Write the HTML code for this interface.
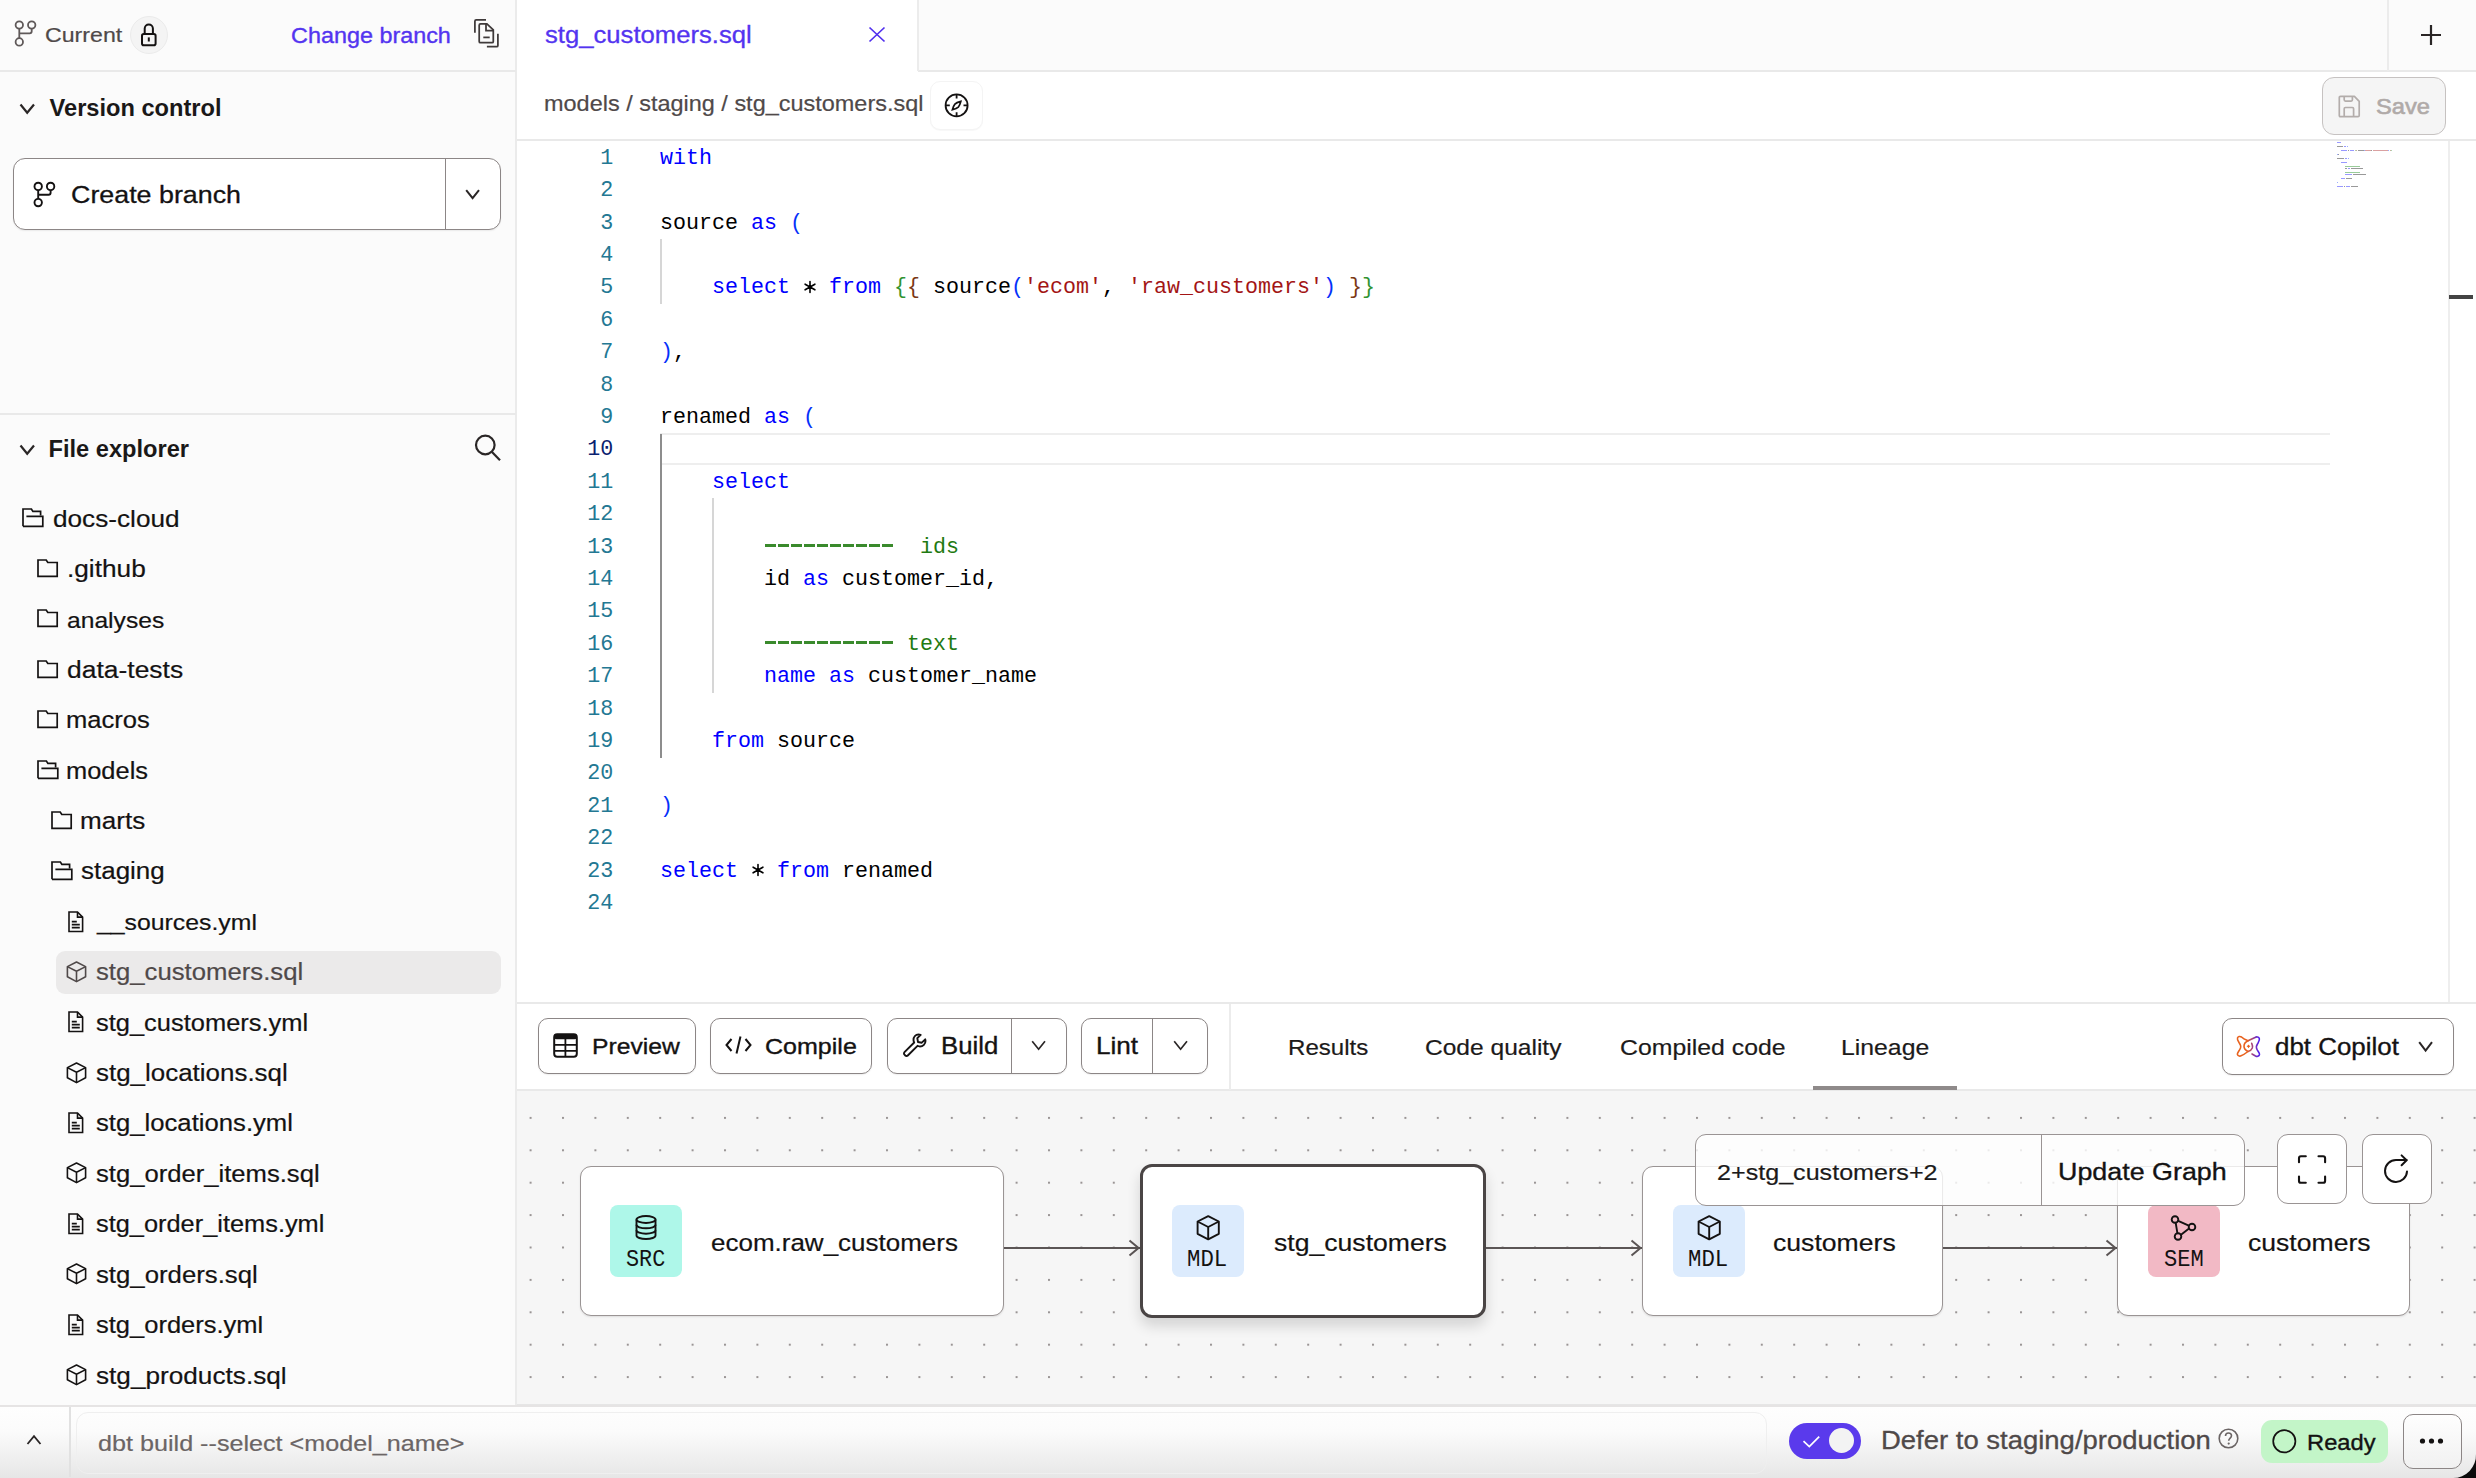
<!DOCTYPE html>
<html><head><meta charset="utf-8"><style>*{box-sizing:border-box;margin:0;padding:0}
html,body{width:2476px;height:1478px;overflow:hidden;background:#fff;font-family:"Liberation Sans",sans-serif}
.a{position:absolute}
.t{position:absolute;white-space:pre;line-height:1}
svg{position:absolute;overflow:visible}
.m{font-family:"Liberation Mono",monospace;font-size:21.663px}
</style></head>
<body>
<div class="a" style="left:0px;top:0px;width:516px;height:1406px;background:#fbfbfb"></div>
<div class="a" style="left:515px;top:0px;width:2px;height:1406px;background:#ebebeb"></div>
<div class="a" style="left:0px;top:70px;width:516px;height:2px;background:#e9e9e9"></div>
<div class="a" style="left:0px;top:413px;width:516px;height:2px;background:#e9e9e9"></div>
<svg style="left:0px;top:0px;" width="60" height="60" viewBox="0 0 60 60" fill="none"><g stroke="#5f5959" stroke-width="1.8"><circle cx="19.3" cy="25" r="3.7"/><circle cx="31.7" cy="25" r="3.7"/><circle cx="19.3" cy="41.9" r="3.7"/><path d="M19.3 28.7V38.2M19.3 33.3H29.7Q31.7 33.3 31.7 31.3V28.7"/></g></svg>
<div class="a" style="left:130px;top:16px;width:38px;height:38px;background:#f4f4f4;border:1px solid #ebebeb;border-radius:50%"></div>
<svg style="left:0px;top:0px;" width="200" height="60" viewBox="0 0 200 60" fill="none"><g stroke="#141212" stroke-width="2"><rect x="142" y="34" width="13.6" height="11.2" rx="1.8"/><path d="M144.7 34V28.6a4.1 4.1 0 0 1 8.2 0V34"/><path d="M148.8 37.4v4.1"/></g></svg>
<svg style="left:465px;top:10px;" width="45" height="45" viewBox="0 0 45 45" fill="none"><g stroke="#3f3a3a" stroke-width="1.75"><path d="M9.9 22.8V11.2Q9.9 9.9 11.2 9.9H21"/><path d="M14.2 15.2Q14.2 13.9 15.5 13.9H21.9L28.3 19.9V31.4Q28.3 32.7 27 32.7H15.5Q14.2 32.7 14.2 31.4Z"/><path d="M21 13.9V20.6H28.3"/><path d="M18.3 27.4H24.7"/><path d="M32.9 23.8V35.4Q32.9 36.7 31.6 36.7H21.9"/></g></svg>
<svg style="left:19px;top:103px;" width="17" height="12" viewBox="0 0 17 12" fill="none"><path d="M1.5 1.5L8.2 9.8L15 1.5" stroke="#2a2626" stroke-width="2.2"/></svg>
<div class="a" style="left:13px;top:158px;width:488px;height:72px;background:#fff;border:1px solid #8c8686;border-radius:12px;box-shadow:0 1px 1.5px rgba(0,0,0,.07)"></div>
<div class="a" style="left:445px;top:159px;width:1px;height:70px;background:#8c8686"></div>
<svg style="left:0px;top:0px;" width="60" height="220" viewBox="0 0 60 220" fill="none"><g stroke="#141212" stroke-width="1.9"><circle cx="38.2" cy="186.4" r="3.7"/><circle cx="50.6" cy="186.4" r="3.7"/><circle cx="38.2" cy="202.6" r="3.7"/><path d="M38.2 190.1V198.9M38.2 194.7H48.6Q50.6 194.7 50.6 192.7V190.1"/></g></svg>
<svg style="left:465px;top:189px;" width="16" height="12" viewBox="0 0 16 12" fill="none"><path d="M1.2 1.2L7.6 9.2L14 1.2" stroke="#2a2626" stroke-width="2"/></svg>
<svg style="left:19px;top:444px;" width="17" height="12" viewBox="0 0 17 12" fill="none"><path d="M1.5 1.5L8.2 9.8L15 1.5" stroke="#2a2626" stroke-width="2.2"/></svg>
<svg style="left:474px;top:434px;" width="28" height="28" viewBox="0 0 28 28" fill="none"><g stroke="#2a2626" stroke-width="2.2"><circle cx="11.3" cy="11" r="9.3"/><path d="M18 18L26 26.2"/></g></svg>
<div class="a" style="left:56px;top:951px;width:445px;height:43px;background:#ebeaea;border-radius:9px"></div>
<svg style="left:22px;top:508.40000000000003px;" width="22" height="20" viewBox="0 0 22 20" fill="none"><path d="M1 18.3V1H9.4L10.9 3.4H18.6V7.3M4.4 8.4H20.8V18.3H1" stroke="#141212" stroke-width="1.7" stroke-linejoin="miter"/></svg>
<svg style="left:36.9px;top:558.7px;" width="22" height="20" viewBox="0 0 22 20" fill="none"><path d="M1 1H9.2L10.8 3.5H20.2V17.4H1Z" stroke="#141212" stroke-width="1.7" stroke-linejoin="miter"/></svg>
<svg style="left:36.9px;top:609.1px;" width="22" height="20" viewBox="0 0 22 20" fill="none"><path d="M1 1H9.2L10.8 3.5H20.2V17.4H1Z" stroke="#141212" stroke-width="1.7" stroke-linejoin="miter"/></svg>
<svg style="left:36.9px;top:659.5000000000001px;" width="22" height="20" viewBox="0 0 22 20" fill="none"><path d="M1 1H9.2L10.8 3.5H20.2V17.4H1Z" stroke="#141212" stroke-width="1.7" stroke-linejoin="miter"/></svg>
<svg style="left:36.9px;top:709.9000000000001px;" width="22" height="20" viewBox="0 0 22 20" fill="none"><path d="M1 1H9.2L10.8 3.5H20.2V17.4H1Z" stroke="#141212" stroke-width="1.7" stroke-linejoin="miter"/></svg>
<svg style="left:36.8px;top:760.4000000000001px;" width="22" height="20" viewBox="0 0 22 20" fill="none"><path d="M1 18.3V1H9.4L10.9 3.4H18.6V7.3M4.4 8.4H20.8V18.3H1" stroke="#141212" stroke-width="1.7" stroke-linejoin="miter"/></svg>
<svg style="left:50.6px;top:810.7px;" width="22" height="20" viewBox="0 0 22 20" fill="none"><path d="M1 1H9.2L10.8 3.5H20.2V17.4H1Z" stroke="#141212" stroke-width="1.7" stroke-linejoin="miter"/></svg>
<svg style="left:50.6px;top:861.2px;" width="22" height="20" viewBox="0 0 22 20" fill="none"><path d="M1 18.3V1H9.4L10.9 3.4H18.6V7.3M4.4 8.4H20.8V18.3H1" stroke="#141212" stroke-width="1.7" stroke-linejoin="miter"/></svg>
<svg style="left:67.9px;top:910.6000000000001px;" width="16" height="22" viewBox="0 0 16 22" fill="none"><g stroke="#141212" stroke-width="1.6" stroke-linejoin="miter"><path d="M1 1H9.5L14.6 6.1V20.5H1Z"/><path d="M9.5 1V6.1H14.6"/><path d="M3.8 10.6H8.8M3.8 13.6H11.8M3.8 16.6H11.8"/></g></svg>
<svg style="left:65.6px;top:960.8px;" width="21" height="22" viewBox="0 0 21 22" fill="none"><g stroke="#4f4949" stroke-width="1.6" stroke-linejoin="round"><path d="M10.5 1L19.6 5.6V15.8L10.5 20.6L1.4 15.8V5.6Z"/><path d="M1.4 5.6L10.5 10.3L19.6 5.6M10.5 10.3V20.6"/></g></svg>
<svg style="left:67.9px;top:1011.4000000000001px;" width="16" height="22" viewBox="0 0 16 22" fill="none"><g stroke="#141212" stroke-width="1.6" stroke-linejoin="miter"><path d="M1 1H9.5L14.6 6.1V20.5H1Z"/><path d="M9.5 1V6.1H14.6"/><path d="M3.8 10.6H8.8M3.8 13.6H11.8M3.8 16.6H11.8"/></g></svg>
<svg style="left:65.6px;top:1061.6px;" width="21" height="22" viewBox="0 0 21 22" fill="none"><g stroke="#141212" stroke-width="1.6" stroke-linejoin="round"><path d="M10.5 1L19.6 5.6V15.8L10.5 20.6L1.4 15.8V5.6Z"/><path d="M1.4 5.6L10.5 10.3L19.6 5.6M10.5 10.3V20.6"/></g></svg>
<svg style="left:67.9px;top:1112.2px;" width="16" height="22" viewBox="0 0 16 22" fill="none"><g stroke="#141212" stroke-width="1.6" stroke-linejoin="miter"><path d="M1 1H9.5L14.6 6.1V20.5H1Z"/><path d="M9.5 1V6.1H14.6"/><path d="M3.8 10.6H8.8M3.8 13.6H11.8M3.8 16.6H11.8"/></g></svg>
<svg style="left:65.6px;top:1162.4px;" width="21" height="22" viewBox="0 0 21 22" fill="none"><g stroke="#141212" stroke-width="1.6" stroke-linejoin="round"><path d="M10.5 1L19.6 5.6V15.8L10.5 20.6L1.4 15.8V5.6Z"/><path d="M1.4 5.6L10.5 10.3L19.6 5.6M10.5 10.3V20.6"/></g></svg>
<svg style="left:67.9px;top:1213.0000000000002px;" width="16" height="22" viewBox="0 0 16 22" fill="none"><g stroke="#141212" stroke-width="1.6" stroke-linejoin="miter"><path d="M1 1H9.5L14.6 6.1V20.5H1Z"/><path d="M9.5 1V6.1H14.6"/><path d="M3.8 10.6H8.8M3.8 13.6H11.8M3.8 16.6H11.8"/></g></svg>
<svg style="left:65.6px;top:1263.2px;" width="21" height="22" viewBox="0 0 21 22" fill="none"><g stroke="#141212" stroke-width="1.6" stroke-linejoin="round"><path d="M10.5 1L19.6 5.6V15.8L10.5 20.6L1.4 15.8V5.6Z"/><path d="M1.4 5.6L10.5 10.3L19.6 5.6M10.5 10.3V20.6"/></g></svg>
<svg style="left:67.9px;top:1313.8px;" width="16" height="22" viewBox="0 0 16 22" fill="none"><g stroke="#141212" stroke-width="1.6" stroke-linejoin="miter"><path d="M1 1H9.5L14.6 6.1V20.5H1Z"/><path d="M9.5 1V6.1H14.6"/><path d="M3.8 10.6H8.8M3.8 13.6H11.8M3.8 16.6H11.8"/></g></svg>
<svg style="left:65.6px;top:1364.0px;" width="21" height="22" viewBox="0 0 21 22" fill="none"><g stroke="#141212" stroke-width="1.6" stroke-linejoin="round"><path d="M10.5 1L19.6 5.6V15.8L10.5 20.6L1.4 15.8V5.6Z"/><path d="M1.4 5.6L10.5 10.3L19.6 5.6M10.5 10.3V20.6"/></g></svg>
<div class="a" style="left:517px;top:0px;width:1959px;height:71px;background:#fbfbfb"></div>
<div class="a" style="left:517px;top:70px;width:1959px;height:2px;background:#e9e9e9"></div>
<div class="a" style="left:517px;top:0px;width:401px;height:72px;background:#fff"></div>
<div class="a" style="left:917px;top:0px;width:2px;height:71px;background:#ececec"></div>
<div class="a" style="left:2387px;top:0px;width:2px;height:71px;background:#ececec"></div>
<svg style="left:869px;top:27px;" width="16" height="15" viewBox="0 0 16 15" fill="none"><path d="M0.5 0.5L15.5 14.5M15.5 0.5L0.5 14.5" stroke="#5130ee" stroke-width="1.7"/></svg>
<svg style="left:2420px;top:24px;" width="22" height="22" viewBox="0 0 22 22" fill="none"><path d="M11 1V21M1 11H21" stroke="#2a2626" stroke-width="2.2"/></svg>
<div class="a" style="left:930px;top:81px;width:53px;height:49px;border:1px solid #f4f4f4;border-radius:10px;background:#fff;box-shadow:0 1px 1px rgba(0,0,0,.03)"></div>
<svg style="left:944px;top:93px;" width="26" height="26" viewBox="0 0 26 26" fill="none"><g stroke="#141212" stroke-width="1.8"><circle cx="12.6" cy="12.4" r="11"/><path d="M12.6 1.6V5.6M12.6 19.3V23.2M1.8 12.4H5.8M19.5 12.4H23.4"/><path d="M16.8 8.4Q15.6 12.6 14.3 14.1Q12.8 15.6 8.4 16.8Q9.6 12.6 10.9 11.1Q12.4 9.6 16.8 8.4Z" stroke-width="1.7"/></g></svg>
<div class="a" style="left:2322px;top:77px;width:124px;height:58px;background:#f5f5f5;border:1px solid #c6c2c1;border-radius:12px"></div>
<svg style="left:2338px;top:95px;" width="23" height="23" viewBox="0 0 23 23" fill="none"><g stroke="#b3adab" stroke-width="1.7" stroke-linejoin="round"><path d="M2.5 1.3H16.4L21.2 6.3V20.5Q21.2 21.7 20 21.7H2.5Q1.3 21.7 1.3 20.5V2.5Q1.3 1.3 2.5 1.3Z"/><path d="M6.2 1.3V4.8Q6.2 6.1 7.4 6.1H13.2Q14.4 6.1 14.4 4.8V1.3"/><path d="M6.2 21.7V13.7Q6.2 12.5 7.4 12.5H14.4Q15.6 12.5 15.6 13.7V21.7"/></g></svg>
<div class="a" style="left:517px;top:139px;width:1959px;height:2px;background:#e9e9e9"></div>
<div class="a" style="left:660px;top:433px;width:1670px;height:2px;background:#eeeeee"></div>
<div class="a" style="left:660px;top:463px;width:1670px;height:2px;background:#eeeeee"></div>
<div class="a" style="left:660px;top:239px;width:2px;height:65px;background:#d6d6d6"></div>
<div class="a" style="left:660px;top:434px;width:2px;height:324px;background:#8d8d8d"></div>
<div class="a" style="left:712px;top:498px;width:2px;height:195px;background:#d6d6d6"></div>
<span class="t m" style="left:600.30px;top:147.74px;color:#237893">1</span>
<span class="t m" style="left:660.00px;top:147.74px;color:#0000ff">with</span>
<span class="t m" style="left:600.30px;top:180.14px;color:#237893">2</span>
<span class="t m" style="left:600.30px;top:212.54px;color:#237893">3</span>
<span class="t m" style="left:660.00px;top:212.54px;color:#000000">source </span>
<span class="t m" style="left:751.00px;top:212.54px;color:#0000ff">as </span>
<span class="t m" style="left:790.00px;top:212.54px;color:#0431fa">(</span>
<span class="t m" style="left:600.30px;top:244.94px;color:#237893">4</span>
<span class="t m" style="left:600.30px;top:277.34px;color:#237893">5</span>
<span class="t m" style="left:712.00px;top:277.34px;color:#0000ff">select </span>
<svg style="left:802.50px;top:280.00px" width="14" height="14" viewBox="-7 -7 14 14" fill="none"><path d="M0 -5.5V5.5M-4.9 -2.8L4.9 2.8M-4.9 2.8L4.9 -2.8" stroke="#000" stroke-width="1.6" stroke-linecap="round"/></svg>
<span class="t m" style="left:829.00px;top:277.34px;color:#0000ff">from </span>
<span class="t m" style="left:894.00px;top:277.34px;color:#319331">{</span>
<span class="t m" style="left:907.00px;top:277.34px;color:#7b3814">{ </span>
<span class="t m" style="left:933.00px;top:277.34px;color:#000000">source</span>
<span class="t m" style="left:1011.00px;top:277.34px;color:#0431fa">(</span>
<span class="t m" style="left:1024.00px;top:277.34px;color:#a31515">'ecom'</span>
<span class="t m" style="left:1102.00px;top:277.34px;color:#000000">, </span>
<span class="t m" style="left:1128.00px;top:277.34px;color:#a31515">'raw_customers'</span>
<span class="t m" style="left:1323.00px;top:277.34px;color:#0431fa">)</span>
<span class="t m" style="left:1349.00px;top:277.34px;color:#7b3814">}</span>
<span class="t m" style="left:1362.00px;top:277.34px;color:#319331">}</span>
<span class="t m" style="left:600.30px;top:309.74px;color:#237893">6</span>
<span class="t m" style="left:600.30px;top:342.14px;color:#237893">7</span>
<span class="t m" style="left:660.00px;top:342.14px;color:#0431fa">)</span>
<span class="t m" style="left:673.00px;top:342.14px;color:#000000">,</span>
<span class="t m" style="left:600.30px;top:374.54px;color:#237893">8</span>
<span class="t m" style="left:600.30px;top:406.94px;color:#237893">9</span>
<span class="t m" style="left:660.00px;top:406.94px;color:#000000">renamed </span>
<span class="t m" style="left:764.00px;top:406.94px;color:#0000ff">as </span>
<span class="t m" style="left:803.00px;top:406.94px;color:#0431fa">(</span>
<span class="t m" style="left:587.30px;top:439.34px;color:#0b216f">10</span>
<span class="t m" style="left:587.30px;top:471.74px;color:#237893">11</span>
<span class="t m" style="left:712.00px;top:471.74px;color:#0000ff">select</span>
<span class="t m" style="left:587.30px;top:504.14px;color:#237893">12</span>
<span class="t m" style="left:587.30px;top:536.54px;color:#237893">13</span>
<div class="a" style="left:765.00px;top:544px;width:128.50px;height:3px;background:repeating-linear-gradient(90deg,#3a8a2c 0 11px,transparent 11px 13px)"></div>
<span class="t m" style="left:920.00px;top:536.54px;color:#1f7a12">ids</span>
<span class="t m" style="left:587.30px;top:568.94px;color:#237893">14</span>
<span class="t m" style="left:660.00px;top:568.94px;color:#000000">        id </span>
<span class="t m" style="left:803.00px;top:568.94px;color:#0000ff">as </span>
<span class="t m" style="left:842.00px;top:568.94px;color:#000000">customer_id,</span>
<span class="t m" style="left:587.30px;top:601.34px;color:#237893">15</span>
<span class="t m" style="left:587.30px;top:633.74px;color:#237893">16</span>
<div class="a" style="left:765.00px;top:641px;width:128.50px;height:3px;background:repeating-linear-gradient(90deg,#3a8a2c 0 11px,transparent 11px 13px)"></div>
<span class="t m" style="left:907.00px;top:633.74px;color:#1f7a12">text</span>
<span class="t m" style="left:587.30px;top:666.14px;color:#237893">17</span>
<span class="t m" style="left:764.00px;top:666.14px;color:#0000ff">name as </span>
<span class="t m" style="left:868.00px;top:666.14px;color:#000000">customer_name</span>
<span class="t m" style="left:587.30px;top:698.54px;color:#237893">18</span>
<span class="t m" style="left:587.30px;top:730.94px;color:#237893">19</span>
<span class="t m" style="left:712.00px;top:730.94px;color:#0000ff">from </span>
<span class="t m" style="left:777.00px;top:730.94px;color:#000000">source</span>
<span class="t m" style="left:587.30px;top:763.34px;color:#237893">20</span>
<span class="t m" style="left:587.30px;top:795.74px;color:#237893">21</span>
<span class="t m" style="left:660.00px;top:795.74px;color:#0431fa">)</span>
<span class="t m" style="left:587.30px;top:828.14px;color:#237893">22</span>
<span class="t m" style="left:587.30px;top:860.54px;color:#237893">23</span>
<span class="t m" style="left:660.00px;top:860.54px;color:#0000ff">select </span>
<svg style="left:750.50px;top:863.20px" width="14" height="14" viewBox="-7 -7 14 14" fill="none"><path d="M0 -5.5V5.5M-4.9 -2.8L4.9 2.8M-4.9 2.8L4.9 -2.8" stroke="#000" stroke-width="1.6" stroke-linecap="round"/></svg>
<span class="t m" style="left:777.00px;top:860.54px;color:#0000ff">from </span>
<span class="t m" style="left:842.00px;top:860.54px;color:#000000">renamed</span>
<span class="t m" style="left:587.30px;top:892.94px;color:#237893">24</span>
<div class="a" style="left:2337.0px;top:141.5px;width:4.0px;height:1px;background:#0000ff;opacity:.4"></div>
<div class="a" style="left:2337.0px;top:145.5px;width:6.0px;height:1px;background:#000000;opacity:.4"></div>
<div class="a" style="left:2344.0px;top:145.5px;width:2.0px;height:1px;background:#0000ff;opacity:.4"></div>
<div class="a" style="left:2347.0px;top:145.5px;width:1.0px;height:1px;background:#0431fa;opacity:.4"></div>
<div class="a" style="left:2341.0px;top:149.5px;width:6.0px;height:1px;background:#0000ff;opacity:.4"></div>
<div class="a" style="left:2348.0px;top:149.5px;width:1.0px;height:1px;background:#000000;opacity:.4"></div>
<div class="a" style="left:2350.0px;top:149.5px;width:4.0px;height:1px;background:#0000ff;opacity:.4"></div>
<div class="a" style="left:2355.0px;top:149.5px;width:1.0px;height:1px;background:#319331;opacity:.4"></div>
<div class="a" style="left:2356.0px;top:149.5px;width:1.0px;height:1px;background:#7b3814;opacity:.4"></div>
<div class="a" style="left:2358.0px;top:149.5px;width:6.0px;height:1px;background:#000000;opacity:.4"></div>
<div class="a" style="left:2364.0px;top:149.5px;width:1.0px;height:1px;background:#0431fa;opacity:.4"></div>
<div class="a" style="left:2365.0px;top:149.5px;width:6.0px;height:1px;background:#a31515;opacity:.4"></div>
<div class="a" style="left:2371.0px;top:149.5px;width:1.0px;height:1px;background:#000000;opacity:.4"></div>
<div class="a" style="left:2373.0px;top:149.5px;width:15.0px;height:1px;background:#a31515;opacity:.4"></div>
<div class="a" style="left:2388.0px;top:149.5px;width:1.0px;height:1px;background:#0431fa;opacity:.4"></div>
<div class="a" style="left:2390.0px;top:149.5px;width:1.0px;height:1px;background:#7b3814;opacity:.4"></div>
<div class="a" style="left:2391.0px;top:149.5px;width:1.0px;height:1px;background:#319331;opacity:.4"></div>
<div class="a" style="left:2337.0px;top:153.5px;width:1.0px;height:1px;background:#0431fa;opacity:.4"></div>
<div class="a" style="left:2338.0px;top:153.5px;width:1.0px;height:1px;background:#000000;opacity:.4"></div>
<div class="a" style="left:2337.0px;top:157.5px;width:7.0px;height:1px;background:#000000;opacity:.4"></div>
<div class="a" style="left:2345.0px;top:157.5px;width:2.0px;height:1px;background:#0000ff;opacity:.4"></div>
<div class="a" style="left:2348.0px;top:157.5px;width:1.0px;height:1px;background:#0431fa;opacity:.4"></div>
<div class="a" style="left:2341.0px;top:161.5px;width:6.0px;height:1px;background:#0000ff;opacity:.4"></div>
<div class="a" style="left:2345.0px;top:165.5px;width:15.0px;height:1px;background:#008000;opacity:.4"></div>
<div class="a" style="left:2345.0px;top:167.5px;width:2.0px;height:1px;background:#000000;opacity:.4"></div>
<div class="a" style="left:2348.0px;top:167.5px;width:2.0px;height:1px;background:#0000ff;opacity:.4"></div>
<div class="a" style="left:2351.0px;top:167.5px;width:12.0px;height:1px;background:#000000;opacity:.4"></div>
<div class="a" style="left:2345.0px;top:171.5px;width:15.0px;height:1px;background:#008000;opacity:.4"></div>
<div class="a" style="left:2345.0px;top:173.5px;width:7.0px;height:1px;background:#0000ff;opacity:.4"></div>
<div class="a" style="left:2353.0px;top:173.5px;width:13.0px;height:1px;background:#000000;opacity:.4"></div>
<div class="a" style="left:2341.0px;top:177.5px;width:4.0px;height:1px;background:#0000ff;opacity:.4"></div>
<div class="a" style="left:2346.0px;top:177.5px;width:6.0px;height:1px;background:#000000;opacity:.4"></div>
<div class="a" style="left:2337.0px;top:181.5px;width:1.0px;height:1px;background:#0431fa;opacity:.4"></div>
<div class="a" style="left:2337.0px;top:185.5px;width:6.0px;height:1px;background:#0000ff;opacity:.4"></div>
<div class="a" style="left:2344.0px;top:185.5px;width:1.0px;height:1px;background:#000000;opacity:.4"></div>
<div class="a" style="left:2346.0px;top:185.5px;width:4.0px;height:1px;background:#0000ff;opacity:.4"></div>
<div class="a" style="left:2351.0px;top:185.5px;width:7.0px;height:1px;background:#000000;opacity:.4"></div>
<div class="a" style="left:2448px;top:141px;width:2px;height:862px;background:#eeeeee"></div>
<div class="a" style="left:2449px;top:295px;width:24px;height:4px;background:#444"></div>
<div class="a" style="left:517px;top:1002px;width:1959px;height:2px;background:#e9e9e9"></div>
<div class="a" style="left:517px;top:1004px;width:1959px;height:86px;background:#fff"></div>
<div class="a" style="left:517px;top:1089px;width:1959px;height:2px;background:#e9e9e9"></div>
<div class="a" style="left:1229px;top:1004px;width:2px;height:86px;background:#ececec"></div>
<div class="a" style="left:538px;top:1018px;width:158px;height:56px;background:#fff;border:1px solid #8c8686;border-radius:10px;box-shadow:0 1px 1.5px rgba(0,0,0,.07)"></div>
<svg style="left:553px;top:1033px;" width="25" height="25" viewBox="0 0 25 25" fill="none"><rect x="1.2" y="1.2" width="22.6" height="22.6" rx="3" stroke="#141212" stroke-width="2"/><rect x="1" y="1" width="23" height="5.2" rx="2.5" fill="#141212"/><path d="M1 11.8H24M1 17.9H24M12.4 6V24" stroke="#141212" stroke-width="1.8"/></svg>
<div class="a" style="left:710px;top:1018px;width:162px;height:56px;background:#fff;border:1px solid #8c8686;border-radius:10px;box-shadow:0 1px 1.5px rgba(0,0,0,.07)"></div>
<svg style="left:725px;top:1035px;" width="27" height="20" viewBox="0 0 27 20" fill="none"><path d="M6.5 4L1.5 10L6.5 16M20.5 4L25.5 10L20.5 16M15.5 1.5L11.5 18.5" stroke="#141212" stroke-width="2"/></svg>
<div class="a" style="left:887px;top:1018px;width:180px;height:56px;background:#fff;border:1px solid #8c8686;border-radius:10px;box-shadow:0 1px 1.5px rgba(0,0,0,.07)"></div>
<div class="a" style="left:1011px;top:1019px;width:1px;height:54px;background:#8c8686"></div>
<svg style="left:902px;top:1032px;" width="26" height="26" viewBox="0 0 26 26" fill="none"><path d="M16.5 2.5C13.5 2.5 11.5 5 11.5 8C11.5 9 11.8 9.8 12.2 10.5L2.5 20.2C1.8 20.9 1.8 22 2.5 22.7L3.3 23.5C4 24.2 5.1 24.2 5.8 23.5L15.5 13.8C16.2 14.2 17 14.5 18 14.5C21 14.5 23.5 12 23.5 9C23.5 8.4 23.4 7.8 23.2 7.3L19.8 10.7L16 10L15.3 6.2L18.7 2.8C18 2.6 17.3 2.5 16.5 2.5Z" stroke="#141212" stroke-width="1.9" stroke-linejoin="round"/></svg>
<svg style="left:1031px;top:1040px;" width="16" height="11" viewBox="0 0 16 11" fill="none"><path d="M1.2 1.2L7.6 9.2L14 1.2" stroke="#2a2626" stroke-width="1.7"/></svg>
<div class="a" style="left:1081px;top:1018px;width:127px;height:56px;background:#fff;border:1px solid #8c8686;border-radius:10px;box-shadow:0 1px 1.5px rgba(0,0,0,.07)"></div>
<div class="a" style="left:1152px;top:1019px;width:1px;height:54px;background:#8c8686"></div>
<svg style="left:1173px;top:1040px;" width="16" height="11" viewBox="0 0 16 11" fill="none"><path d="M1.2 1.2L7.6 9.2L14 1.2" stroke="#2a2626" stroke-width="1.7"/></svg>
<div class="a" style="left:1813px;top:1086px;width:144px;height:4px;background:#8f8a8a"></div>
<div class="a" style="left:2222px;top:1018px;width:232px;height:57px;background:#fff;border:1px solid #8c8686;border-radius:10px;box-shadow:0 1px 1.5px rgba(0,0,0,.07)"></div>
<svg style="left:2230px;top:1028px;" width="36" height="36" viewBox="0 0 36 36" fill="none"><defs><linearGradient id="cg" gradientUnits="userSpaceOnUse" x1="17" y1="0" x2="29" y2="0"><stop offset="0" stop-color="#e8611d"/><stop offset="1" stop-color="#4f1ff0"/></linearGradient></defs><g stroke-width="1.6" stroke-linecap="round" fill="none"><path stroke="#e8611d" d="M18 12.8C15 11.5 13 10.5 11.5 9C10 8 8 8.5 7.5 10C7 11.5 8 13 9 14.5C10.5 16.5 11 18.5 10.5 20C9.5 22.5 8 24 7.5 25.5C7 27 8.5 28.5 10.5 28C13 27 15.5 25.5 18 23.5M18 12.8C15.5 14 14 16 14 18.3C14 20.5 15.8 22.5 18 23.5"/><path stroke="url(#cg)" d="M18 12.8L25 9.5C26.5 8.5 28.5 8.8 29.3 10.3C30 12 28.5 14 27.5 16C26 18 26 19.5 27 21.5C28 23.5 29.8 25 29.5 26.5C29 28.5 27 28.8 25.5 28L22 26M21.7 15.3C22.5 17 22.8 18.5 22.3 20C21.5 22 20 23 18 23.5"/></g><path d="M18.5 16.4L19.3 17.5L20.4 18.3L19.3 19.1L18.5 20.2L17.7 19.1L16.6 18.3L17.7 17.5Z" fill="#e8611d"/></svg>
<svg style="left:2418px;top:1041px;" width="16" height="12" viewBox="0 0 16 12" fill="none"><path d="M1.2 1.2L7.6 9.6L14 1.2" stroke="#2a2626" stroke-width="2"/></svg>
<div class="a" style="left:517px;top:1091px;width:1959px;height:314px;background:#f6f6f6"></div>
<svg style="left:517px;top:1091px;" width="1959" height="314" viewBox="0 0 1959 314" fill="none"><defs><pattern id="dots" patternUnits="userSpaceOnUse" x="12.6" y="25.9" width="32.4" height="32.4"><rect x="0" y="0" width="2" height="2" fill="#9a9595"/></pattern></defs><rect width="1959" height="314" fill="url(#dots)"/></svg>
<div class="a" style="left:517px;top:1404px;width:1959px;height:2px;background:#e6e6e6"></div>
<div class="a" style="left:580px;top:1166px;width:424px;height:150px;background:#fff;border:1px solid #9a9494;border-radius:11px;box-shadow:0 1px 2px rgba(0,0,0,.10)"></div>
<div class="a" style="left:610px;top:1205px;width:72px;height:72px;background:#aef7e9;border-radius:8px"></div>
<svg style="left:634px;top:1215px;" width="24" height="26" viewBox="0 0 24 26" fill="none"><g stroke="#141212" stroke-width="1.9"><ellipse cx="12" cy="4.5" rx="9.5" ry="3.5"/><path d="M2.5 4.5V20.5C2.5 22.5 6.8 24 12 24C17.2 24 21.5 22.5 21.5 20.5V4.5"/><path d="M2.5 9.8C2.5 11.8 6.8 13.3 12 13.3C17.2 13.3 21.5 11.8 21.5 9.8M2.5 15.2C2.5 17.2 6.8 18.7 12 18.7C17.2 18.7 21.5 17.2 21.5 15.2"/></g></svg>
<div class="a" style="left:1004px;top:1246.5px;width:136px;height:2px;background:#5b5555"></div>
<svg style="left:1128px;top:1238.5px;" width="13" height="18" viewBox="0 0 13 18" fill="none"><path d="M1.5 1.5L10.5 9L1.5 16.5" stroke="#5b5555" stroke-width="2"/></svg>
<div class="a" style="left:1140px;top:1164px;width:346px;height:154px;background:#fff;border:3.5px solid #4a4545;border-radius:12px;box-shadow:0 8px 14px rgba(0,0,0,.14)"></div>
<div class="a" style="left:1172px;top:1205px;width:72px;height:72px;background:#dcebfd;border-radius:8px"></div>
<svg style="left:1195.5px;top:1214.5px;" width="24.5" height="25.5" viewBox="0 0 24.5 25.5" fill="none"><g stroke="#141212" stroke-width="1.9" stroke-linejoin="round"><path d="M12.2 1.2L22.8 6.5V18.8L12.2 24.3L1.6 18.8V6.5Z"/><path d="M1.6 6.5L12.2 12L22.8 6.5M12.2 12V24.3"/></g></svg>
<div class="a" style="left:1486px;top:1246.5px;width:156px;height:2px;background:#5b5555"></div>
<svg style="left:1630px;top:1238.5px;" width="13" height="18" viewBox="0 0 13 18" fill="none"><path d="M1.5 1.5L10.5 9L1.5 16.5" stroke="#5b5555" stroke-width="2"/></svg>
<div class="a" style="left:1642px;top:1166px;width:301px;height:150px;background:#fff;border:1px solid #9a9494;border-radius:11px;box-shadow:0 1px 2px rgba(0,0,0,.10)"></div>
<div class="a" style="left:1673px;top:1205px;width:72px;height:72px;background:#dcebfd;border-radius:8px"></div>
<svg style="left:1696.5px;top:1214.5px;" width="24.5" height="25.5" viewBox="0 0 24.5 25.5" fill="none"><g stroke="#141212" stroke-width="1.9" stroke-linejoin="round"><path d="M12.2 1.2L22.8 6.5V18.8L12.2 24.3L1.6 18.8V6.5Z"/><path d="M1.6 6.5L12.2 12L22.8 6.5M12.2 12V24.3"/></g></svg>
<div class="a" style="left:1943px;top:1246.5px;width:174px;height:2px;background:#5b5555"></div>
<svg style="left:2105px;top:1238.5px;" width="13" height="18" viewBox="0 0 13 18" fill="none"><path d="M1.5 1.5L10.5 9L1.5 16.5" stroke="#5b5555" stroke-width="2"/></svg>
<div class="a" style="left:2117px;top:1166px;width:293px;height:150px;background:#fff;border:1px solid #9a9494;border-radius:11px;box-shadow:0 1px 2px rgba(0,0,0,.10)"></div>
<div class="a" style="left:2148px;top:1205px;width:72px;height:72px;background:#f2b9c5;border-radius:8px"></div>
<svg style="left:2170px;top:1215px;" width="28" height="26" viewBox="0 0 28 26" fill="none"><g stroke="#141212" stroke-width="1.9"><circle cx="5" cy="4.5" r="3.3"/><circle cx="22" cy="12" r="3.3"/><circle cx="8" cy="21.5" r="3.3"/><path d="M8.2 5.8L18.8 10.6M19 13.6L11 19.8M5.7 7.8L7.4 18.2"/></g></svg>
<div class="a" style="left:1695px;top:1134px;width:550px;height:72px;background:rgba(255,255,255,.8);border:1px solid #9a9494;border-radius:11px"></div>
<div class="a" style="left:2041px;top:1135px;width:1px;height:70px;background:#9a9494"></div>
<div class="a" style="left:2277px;top:1134px;width:70px;height:70px;background:#fff;border:1px solid #9a9494;border-radius:11px"></div>
<svg style="left:2290px;top:1150px;" width="44" height="40" viewBox="0 0 44 40" fill="none"><path d="M9 12.2V8.2Q9 6.3 10.9 6.3H15.8M28.5 6.3H33.1Q35.1 6.3 35.1 8.2V12.2M35.1 26.6V31Q35.1 32.8 33.1 32.8H28.5M15.8 32.8H10.9Q9 32.8 9 31V26.6" stroke="#141212" stroke-width="2.1" stroke-linecap="round"/></svg>
<div class="a" style="left:2362px;top:1134px;width:70px;height:70px;background:#fff;border:1px solid #9a9494;border-radius:11px"></div>
<svg style="left:2370px;top:1140px;" width="50" height="50" viewBox="0 0 50 50" fill="none"><g stroke="#141212" stroke-width="2" stroke-linecap="round" stroke-linejoin="round"><path d="M37 31.5A11 11 0 1 1 26.3 20H36.6"/><path d="M31.6 15.4L36.6 20.3L31.6 25.2"/></g></svg>
<div class="a" style="left:0px;top:1405px;width:2476px;height:2px;background:#e6e4e4"></div>
<div class="a" style="left:0px;top:1407px;width:2476px;height:71px;background:linear-gradient(#fefefe,#fbfbfb 35%,#e6e6e6)"></div>
<div class="a" style="left:69px;top:1407px;width:2px;height:70px;background:#e1e1e1"></div>
<svg style="left:26px;top:1434px;" width="16" height="12" viewBox="0 0 16 12" fill="none"><path d="M1.5 10L8 2.2L14.5 10" stroke="#2a2626" stroke-width="1.8"/></svg>
<div class="a" style="left:76px;top:1412px;width:1691px;height:62px;border:1px solid #efefef;border-radius:12px"></div>
<div class="a" style="left:1789px;top:1423px;width:72px;height:36px;background:#5a3aec;border-radius:18px"></div>
<div class="a" style="left:1829px;top:1428px;width:25px;height:25px;background:#f3f3f3;border-radius:50%"></div>
<svg style="left:1801px;top:1434px;" width="19" height="14" viewBox="0 0 19 14" fill="none"><path d="M2.5 7.2L8.3 12.6L18.2 2.6" stroke="#fff" stroke-width="1.7"/></svg>
<svg style="left:2218px;top:1428px;" width="21" height="21" viewBox="0 0 21 21" fill="none"><circle cx="10.5" cy="10.5" r="9.3" stroke="#6b6565" stroke-width="1.6"/><path d="M7.5 8C7.5 6 9 5 10.5 5C12.5 5 13.5 6.3 13.5 7.8C13.5 10 10.7 10.3 10.7 12.8" stroke="#6b6565" stroke-width="1.6"/><circle cx="10.7" cy="15.6" r="1.1" fill="#6b6565"/></svg>
<div class="a" style="left:2261px;top:1420px;width:127px;height:43px;background:#c3f5c8;border-radius:11px"></div>
<svg style="left:2272px;top:1430px;" width="26" height="25" viewBox="0 0 26 25" fill="none"><circle cx="12.3" cy="11.3" r="11.1" stroke="#141212" stroke-width="1.7"/></svg>
<div class="a" style="left:2403px;top:1414px;width:59px;height:55px;border:1px solid #8c8686;border-radius:10px;background:linear-gradient(#fefefe,#f1f1f1)"></div>
<svg style="left:2419px;top:1436px;" width="26" height="10" viewBox="0 0 26 10" fill="none"><circle cx="3.5" cy="5" r="2.6" fill="#141212"/><circle cx="12.5" cy="5" r="2.6" fill="#141212"/><circle cx="21.5" cy="5" r="2.6" fill="#141212"/></svg>
<svg style="left:2450px;top:1452px;" width="26" height="26" viewBox="0 0 26 26" fill="none"><path d="M26 2V26H3A23 23 0 0 0 26 2Z" fill="#0a0a0a"/></svg>
<span class="t" style="left:44.64px;top:24.00px;font-size:21.064px;font-family:'Liberation Sans';font-weight:400;color:#4f4949;transform:scaleX(1.1);transform-origin:0 0;-webkit-text-stroke:0.2px #4f4949;">Current</span>
<span class="t" style="left:290.73px;top:26.00px;font-size:21.253px;font-family:'Liberation Sans';font-weight:400;color:#5334f0;transform:scaleX(1.1);transform-origin:0 0;-webkit-text-stroke:0.35px #5334f0">Change branch</span>
<span class="t" style="left:49.56px;top:97.00px;font-size:23.639px;font-family:'Liberation Sans';font-weight:700;color:#1a1818;">Version control</span>
<span class="t" style="left:71.16px;top:183.00px;font-size:24.408px;font-family:'Liberation Sans';font-weight:400;color:#141212;transform:scaleX(1.1);transform-origin:0 0;-webkit-text-stroke:0.3px #141212">Create branch</span>
<span class="t" style="left:48.55px;top:438.00px;font-size:23.635px;font-family:'Liberation Sans';font-weight:700;color:#1a1818;">File explorer</span>
<span class="t" style="left:52.55px;top:507.00px;font-size:23.813px;font-family:'Liberation Sans';font-weight:400;color:#141212;transform:scaleX(1.1);transform-origin:0 0;-webkit-text-stroke:0.2px #141212;">docs-cloud</span>
<span class="t" style="left:66.54px;top:557.00px;font-size:23.852px;font-family:'Liberation Sans';font-weight:400;color:#141212;transform:scaleX(1.1);transform-origin:0 0;-webkit-text-stroke:0.2px #141212;">.github</span>
<span class="t" style="left:66.91px;top:610.00px;font-size:22.410px;font-family:'Liberation Sans';font-weight:400;color:#141212;transform:scaleX(1.1);transform-origin:0 0;-webkit-text-stroke:0.2px #141212;">analyses</span>
<span class="t" style="left:66.84px;top:658.00px;font-size:24.067px;font-family:'Liberation Sans';font-weight:400;color:#141212;transform:scaleX(1.1);transform-origin:0 0;-webkit-text-stroke:0.2px #141212;">data-tests</span>
<span class="t" style="left:66.11px;top:709.00px;font-size:23.258px;font-family:'Liberation Sans';font-weight:400;color:#141212;transform:scaleX(1.1);transform-origin:0 0;-webkit-text-stroke:0.2px #141212;">macros</span>
<span class="t" style="left:66.12px;top:760.00px;font-size:23.135px;font-family:'Liberation Sans';font-weight:400;color:#141212;transform:scaleX(1.1);transform-origin:0 0;-webkit-text-stroke:0.2px #141212;">models</span>
<span class="t" style="left:80.27px;top:810.00px;font-size:23.735px;font-family:'Liberation Sans';font-weight:400;color:#141212;transform:scaleX(1.1);transform-origin:0 0;-webkit-text-stroke:0.2px #141212;">marts</span>
<span class="t" style="left:81.32px;top:860.00px;font-size:23.613px;font-family:'Liberation Sans';font-weight:400;color:#141212;transform:scaleX(1.1);transform-origin:0 0;-webkit-text-stroke:0.2px #141212;">staging</span>
<span class="t" style="left:96.70px;top:912.00px;font-size:22.557px;font-family:'Liberation Sans';font-weight:400;color:#141212;transform:scaleX(1.1);transform-origin:0 0;-webkit-text-stroke:0.2px #141212;">__sources.yml</span>
<span class="t" style="left:95.83px;top:961.00px;font-size:23.390px;font-family:'Liberation Sans';font-weight:400;color:#4f4949;transform:scaleX(1.1);transform-origin:0 0;-webkit-text-stroke:0.2px #4f4949;">stg_customers.sql</span>
<span class="t" style="left:95.84px;top:1012.00px;font-size:23.158px;font-family:'Liberation Sans';font-weight:400;color:#141212;transform:scaleX(1.1);transform-origin:0 0;-webkit-text-stroke:0.2px #141212;">stg_customers.yml</span>
<span class="t" style="left:95.92px;top:1062.00px;font-size:23.587px;font-family:'Liberation Sans';font-weight:400;color:#141212;transform:scaleX(1.1);transform-origin:0 0;-webkit-text-stroke:0.2px #141212;">stg_locations.sql</span>
<span class="t" style="left:95.93px;top:1112.00px;font-size:23.358px;font-family:'Liberation Sans';font-weight:400;color:#141212;transform:scaleX(1.1);transform-origin:0 0;-webkit-text-stroke:0.2px #141212;">stg_locations.yml</span>
<span class="t" style="left:95.93px;top:1163.00px;font-size:23.312px;font-family:'Liberation Sans';font-weight:400;color:#141212;transform:scaleX(1.1);transform-origin:0 0;-webkit-text-stroke:0.2px #141212;">stg_order_items.sql</span>
<span class="t" style="left:95.94px;top:1213.00px;font-size:23.079px;font-family:'Liberation Sans';font-weight:400;color:#141212;transform:scaleX(1.1);transform-origin:0 0;-webkit-text-stroke:0.2px #141212;">stg_order_items.yml</span>
<span class="t" style="left:95.93px;top:1264.00px;font-size:23.419px;font-family:'Liberation Sans';font-weight:400;color:#141212;transform:scaleX(1.1);transform-origin:0 0;-webkit-text-stroke:0.2px #141212;">stg_orders.sql</span>
<span class="t" style="left:95.93px;top:1314.00px;font-size:23.192px;font-family:'Liberation Sans';font-weight:400;color:#141212;transform:scaleX(1.1);transform-origin:0 0;-webkit-text-stroke:0.2px #141212;">stg_orders.yml</span>
<span class="t" style="left:95.91px;top:1364.00px;font-size:23.808px;font-family:'Liberation Sans';font-weight:400;color:#141212;transform:scaleX(1.1);transform-origin:0 0;-webkit-text-stroke:0.2px #141212;">stg_products.sql</span>
<span class="t" style="left:545.23px;top:24.00px;font-size:23.344px;font-family:'Liberation Sans';font-weight:400;color:#5334f0;transform:scaleX(1.1);transform-origin:0 0;-webkit-text-stroke:0.3px #5334f0">stg_customers.sql</span>
<span class="t" style="left:544.36px;top:94.00px;font-size:21.339px;font-family:'Liberation Sans';font-weight:400;color:#4f4949;transform:scaleX(1.1);transform-origin:0 0;-webkit-text-stroke:0.2px #4f4949;">models / staging / stg_customers.sql</span>
<span class="t" style="left:2376.32px;top:97.00px;font-size:21.544px;font-family:'Liberation Sans';font-weight:400;color:#b0aaa8;transform:scaleX(1.1);transform-origin:0 0;-webkit-text-stroke:0.6px #b0aaa8">Save</span>
<span class="t" style="left:592.13px;top:1036.00px;font-size:22.440px;font-family:'Liberation Sans';font-weight:400;color:#141212;transform:scaleX(1.1);transform-origin:0 0;-webkit-text-stroke:0.35px #141212">Preview</span>
<span class="t" style="left:765.05px;top:1035.00px;font-size:22.778px;font-family:'Liberation Sans';font-weight:400;color:#141212;transform:scaleX(1.1);transform-origin:0 0;-webkit-text-stroke:0.35px #141212">Compile</span>
<span class="t" style="left:940.74px;top:1035.00px;font-size:23.383px;font-family:'Liberation Sans';font-weight:400;color:#141212;transform:scaleX(1.1);transform-origin:0 0;-webkit-text-stroke:0.35px #141212">Build</span>
<span class="t" style="left:1095.91px;top:1034.00px;font-size:23.767px;font-family:'Liberation Sans';font-weight:400;color:#141212;transform:scaleX(1.1);transform-origin:0 0;-webkit-text-stroke:0.35px #141212">Lint</span>
<span class="t" style="left:1287.77px;top:1037.00px;font-size:21.909px;font-family:'Liberation Sans';font-weight:400;color:#1c1a1a;transform:scaleX(1.1);transform-origin:0 0;-webkit-text-stroke:0.2px #1c1a1a;">Results</span>
<span class="t" style="left:1425.37px;top:1037.00px;font-size:22.323px;font-family:'Liberation Sans';font-weight:400;color:#1c1a1a;transform:scaleX(1.1);transform-origin:0 0;-webkit-text-stroke:0.2px #1c1a1a;">Code quality</span>
<span class="t" style="left:1619.56px;top:1037.00px;font-size:22.575px;font-family:'Liberation Sans';font-weight:400;color:#1c1a1a;transform:scaleX(1.1);transform-origin:0 0;-webkit-text-stroke:0.2px #1c1a1a;">Compiled code</span>
<span class="t" style="left:1840.52px;top:1037.00px;font-size:22.542px;font-family:'Liberation Sans';font-weight:400;color:#1c1a1a;transform:scaleX(1.1);transform-origin:0 0;-webkit-text-stroke:0.2px #1c1a1a;">Lineage</span>
<span class="t" style="left:2274.56px;top:1036.00px;font-size:23.563px;font-family:'Liberation Sans';font-weight:400;color:#141212;transform:scaleX(1.1);transform-origin:0 0;-webkit-text-stroke:0.35px #141212">dbt Copilot</span>
<span class="t" style="left:625.63px;top:1248.00px;font-size:24.500px;font-family:'Liberation Mono';font-weight:400;color:#141212;transform:scaleX(0.889890840056953);transform-origin:0 0;">SRC</span>
<span class="t" style="left:710.76px;top:1232.00px;font-size:23.638px;font-family:'Liberation Sans';font-weight:400;color:#141212;transform:scaleX(1.1);transform-origin:0 0;-webkit-text-stroke:0.2px #141212;">ecom.raw_customers</span>
<span class="t" style="left:1187.16px;top:1248.00px;font-size:24.500px;font-family:'Liberation Mono';font-weight:400;color:#141212;transform:scaleX(0.9110787172011663);transform-origin:0 0;">MDL</span>
<span class="t" style="left:1273.60px;top:1231.00px;font-size:24.181px;font-family:'Liberation Sans';font-weight:400;color:#141212;transform:scaleX(1.1);transform-origin:0 0;-webkit-text-stroke:0.2px #141212;">stg_customers</span>
<span class="t" style="left:1688.16px;top:1248.00px;font-size:24.500px;font-family:'Liberation Mono';font-weight:400;color:#141212;transform:scaleX(0.9110787172011663);transform-origin:0 0;">MDL</span>
<span class="t" style="left:1773.33px;top:1231.00px;font-size:24.209px;font-family:'Liberation Sans';font-weight:400;color:#141212;transform:scaleX(1.1);transform-origin:0 0;-webkit-text-stroke:0.2px #141212;">customers</span>
<span class="t" style="left:2163.62px;top:1248.00px;font-size:24.500px;font-family:'Liberation Mono';font-weight:400;color:#141212;transform:scaleX(0.9003601440576231);transform-origin:0 0;">SEM</span>
<span class="t" style="left:2248.44px;top:1231.00px;font-size:24.169px;font-family:'Liberation Sans';font-weight:400;color:#141212;transform:scaleX(1.1);transform-origin:0 0;-webkit-text-stroke:0.2px #141212;">customers</span>
<span class="t" style="left:1717.24px;top:1161.00px;font-size:22.842px;font-family:'Liberation Sans';font-weight:400;color:#1c1a1a;transform:scaleX(1.1);transform-origin:0 0;-webkit-text-stroke:0.2px #1c1a1a;">2+stg_customers+2</span>
<span class="t" style="left:2058.25px;top:1160.00px;font-size:24.430px;font-family:'Liberation Sans';font-weight:400;color:#141212;transform:scaleX(1.1);transform-origin:0 0;-webkit-text-stroke:0.35px #141212">Update Graph</span>
<span class="t" style="left:97.99px;top:1432.00px;font-size:22.897px;font-family:'Liberation Sans';font-weight:400;color:#6b6565;transform:scaleX(1.1);transform-origin:0 0;-webkit-text-stroke:0.2px #6b6565;">dbt build --select &lt;model_name&gt;</span>
<span class="t" style="left:1881.20px;top:1428.00px;font-size:24.989px;font-family:'Liberation Sans';font-weight:400;color:#4f4949;transform:scaleX(1.1);transform-origin:0 0;-webkit-text-stroke:0.3px #4f4949">Defer to staging/production</span>
<span class="t" style="left:2306.90px;top:1432.00px;font-size:21.579px;font-family:'Liberation Sans';font-weight:400;color:#141212;transform:scaleX(1.1);transform-origin:0 0;-webkit-text-stroke:0.35px #141212">Ready</span>
</body></html>
